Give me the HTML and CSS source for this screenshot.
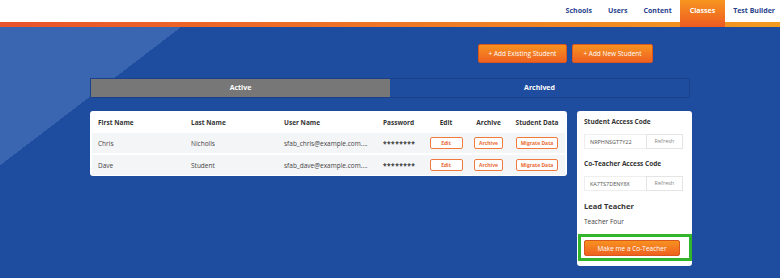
FILE: index.html
```html
<!DOCTYPE html>
<html lang="en">
<head>
    <meta charset="UTF-8">
    <meta name="viewport" content="width=device-width, initial-scale=1.0">
    <title>Classes</title>
    <link rel="stylesheet" href="styles.css">
</head>
<body>

    <!-- Top navigation -->
    <div class="nav">
        <a class="nav-link">Schools</a>
        <a class="nav-link">Users</a>
        <a class="nav-link">Content</a>
        <a class="nav-link current">Classes</a>
        <a class="nav-link">Test Builder</a>
    </div>

    <div class="page">
        <div class="actions">
            <button class="btn-orange">+ Add Existing Student</button>
            <button class="btn-orange">+ Add New Student</button>
        </div>

        <!-- Tabs -->
        <div class="tabs">
            <div class="tab active">Active</div>
            <div class="tab">Archived</div>
        </div>

        <div class="cards">
            <!-- Students -->
            <div class="card students">
                <div class="row head">
                    <div class="cell">First Name</div>
                    <div class="cell">Last Name</div>
                    <div class="cell">User Name</div>
                    <div class="cell">Password</div>
                    <div class="cell mid">Edit</div>
                    <div class="cell mid">Archive</div>
                    <div class="cell mid">Student Data</div>
                </div>
                <div class="row">
                    <div class="cell">Chris</div>
                    <div class="cell">Nicholls</div>
                    <div class="cell">sfab_chris@example.com....</div>
                    <div class="cell"><span class="pw">********</span></div>
                    <div class="cell mid"><button class="btn-line edit">Edit</button></div>
                    <div class="cell mid"><button class="btn-line">Archive</button></div>
                    <div class="cell mid"><button class="btn-line">Migrate Data</button></div>
                </div>
                <div class="row">
                    <div class="cell">Dave</div>
                    <div class="cell">Student</div>
                    <div class="cell">sfab_dave@example.com....</div>
                    <div class="cell"><span class="pw">********</span></div>
                    <div class="cell mid"><button class="btn-line edit">Edit</button></div>
                    <div class="cell mid"><button class="btn-line">Archive</button></div>
                    <div class="cell mid"><button class="btn-line">Migrate Data</button></div>
                </div>
            </div>

            <!-- Class info -->
            <div class="card side">
                <div class="label">Student Access Code</div>
                <div class="code">
                    <span class="code-value">NRPHNSGT7Y22</span>
                    <span class="code-btn">Refresh</span>
                </div>
                <div class="label second">Co-Teacher Access Code</div>
                <div class="code">
                    <span class="code-value">KA7TS7DENY8X</span>
                    <span class="code-btn">Refresh</span>
                </div>
                <div class="label lead">Lead Teacher</div>
                <div class="teacher">Teacher Four</div>
                <div class="highlight">
                    <button class="btn-orange big">Make me a Co-Teacher</button>
                </div>
            </div>
        </div>
    </div>

</body>
</html>
```

FILE: styles.css
```css
body {
    margin: 0;
    font-family: "Open Sans", "DejaVu Sans", sans-serif;
    background: #1e4c9e;
    height: 278px;
    overflow: hidden;
}

.nav {
    display: flex;
    justify-content: flex-end;
    align-items: flex-start;
    height: 27px;
    background: linear-gradient(#fff, #fff) top / 100% 22px no-repeat,
                linear-gradient(90deg, #e9532b, #f39a20);
}
.nav-link {
    height: 22px;
    line-height: 22px;
    padding: 0 8px;
    font-size: 7px;
    font-weight: 700;
    color: #283f8c;
}
.nav-link:last-child {
    padding-right: 5px;
}
.current {
    height: 27px;
    padding: 0 10px;
    line-height: 22px;
    color: #fff;
    background: linear-gradient(#f7951f, #ee5a22);
}

.page {
    height: 251px;
    box-sizing: border-box;
    padding: 17px 88px 0 90px;
    background: linear-gradient(142.6deg, #3a65b1 110px, #1e4c9e 110px);
}

.actions {
    display: flex;
    justify-content: flex-end;
    gap: 5px;
    padding-right: 39px;
}
.btn-orange {
    height: 19px;
    padding: 0;
    border: 1px solid #d9561d;
    border-radius: 2px;
    font-family: inherit;
    font-size: 6.5px;
    white-space: nowrap;
    color: #fff;
    background: linear-gradient(#f7921f, #ef6222);
}
.actions .btn-orange:first-child {
    width: 89px;
}
.actions .btn-orange:last-child {
    width: 81px;
}

.tabs {
    display: flex;
    margin-top: 15px;
    margin-right: 2px;
    border: 1px solid #1a418a;
}
.tab {
    flex: 1;
    height: 18px;
    line-height: 18px;
    text-align: center;
    font-size: 7px;
    font-weight: 700;
    color: #fff;
}
.tab.active {
    background: #777;
}

.cards {
    display: flex;
    align-items: flex-start;
    gap: 10px;
    margin-top: 13px;
}
.card {
    background: #fff;
    border-radius: 3px;
}

.students {
    width: 477px;
    box-sizing: border-box;
    padding: 2px 2px 1px;
}
.row {
    display: grid;
    grid-template-columns: 93px 93px 99px 47px 44px 41px 56px;
    align-items: center;
    height: 20px;
    margin-bottom: 2px;
    background: #f4f5f7;
    font-size: 6.5px;
    color: #444;
}
.row.head {
    height: 18px;
    background: #fff;
    font-weight: 700;
    color: #333;
}
.row:last-child {
    margin-bottom: 0;
}
.cell {
    padding-left: 6px;
    white-space: nowrap;
    overflow: hidden;
}
.cell.mid {
    padding-left: 0;
    text-align: center;
}
.pw {
    font-weight: 700;
    color: #333;
    letter-spacing: 0.5px;
    border-bottom: 1px solid #555;
    padding-bottom: 1px;
}
.btn-line {
    height: 12px;
    padding: 0 4px;
    border: 1px solid #f07a3e;
    border-radius: 2px;
    background: #fff;
    font-family: inherit;
    font-size: 5px;
    font-weight: 700;
    color: #ea6a33;
}
.btn-line.edit {
    width: 33px;
}

.side {
    width: 115px;
    box-sizing: border-box;
    padding: 6px 6px 5px 7px;
}
.label {
    font-size: 6.5px;
    font-weight: 700;
    line-height: 10px;
    color: #333;
}
.label.second {
    margin-top: 10px;
}
.label.lead {
    margin-top: 9px;
    font-size: 7.5px;
    line-height: 12px;
}
.code {
    display: flex;
    width: 99px;
    height: 15px;
    margin-top: 7px;
    font-size: 5.5px;
    color: #555;
}
.code-value {
    width: 63px;
    line-height: 15px;
    padding-left: 5px;
    box-sizing: border-box;
    border: 1px solid #eee;
    border-right: none;
}
.code-btn {
    width: 36px;
    line-height: 13px;
    text-align: center;
    border: 1px solid #e4e4e4;
    color: #888;
}
.teacher {
    margin-top: 5px;
    font-size: 6.5px;
    line-height: 10px;
    color: #444;
}
.highlight {
    width: 102px;
    margin: 7px 0 0 -6px;
    padding: 3px 3px 2px;
    border: 3px solid #32b52a;
    background: #fff;
}
.btn-orange.big {
    display: block;
    width: 96px;
    height: 16px;
    font-size: 6.5px;
}
```
